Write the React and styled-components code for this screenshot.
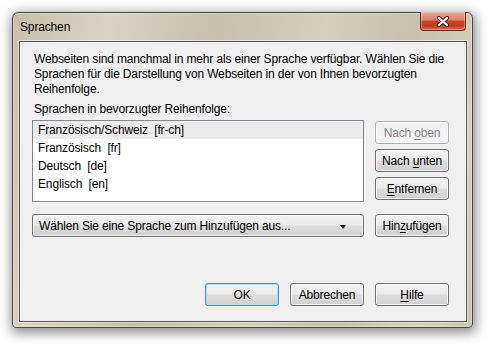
import React from 'react'
import styled, { createGlobalStyle } from 'styled-components'

const GlobalStyle = createGlobalStyle`
  html, body {
    margin: 0;
    padding: 0;
    background: #ffffff;
  }
  body {
    font-family: "Segoe UI", "Liberation Sans", Arial, sans-serif;
    font-size: 12px;
    letter-spacing: -0.15px;
    color: #000;
  }
`

const Desktop = styled.div`
  width: 488px;
  height: 344px;
  padding: 12px 0 0 12px;
  box-sizing: border-box;
  overflow: hidden;
`

const Window = styled.div`
  width: 461px;
  height: 316px;
  box-sizing: border-box;
  display: flex;
  flex-direction: column;
  padding: 0 5px 5px 6px;
  border: 1px solid #474747;
  border-radius: 6px 6px 4px 4px;
  background: linear-gradient(105deg, #c6bea9 0%, #d9d3c3 18%, #c7bfaa 38%, #d5cebc 58%, #c8c0ab 74%, #d7d0bf 90%, #cbc3ae 100%);
  box-shadow: 1px 3px 12px 2px rgba(0, 0, 0, 0.45), inset 0 0 0 1px rgba(255, 255, 255, 0.35);
`

const TitleBar = styled.div`
  height: 28px;
  display: flex;
  align-items: center;
  justify-content: space-between;
`

const Title = styled.span`
  padding-left: 1px;
  font-size: 12px;
  color: #000;
`

const CloseButton = styled.div`
  align-self: flex-start;
  margin-top: -1px;
  margin-right: 1px;
  width: 46px;
  height: 19px;
  box-sizing: border-box;
  display: flex;
  align-items: center;
  justify-content: center;
  border: 1px solid #6e2a1c;
  border-top: none;
  border-radius: 0 0 4px 4px;
  background: linear-gradient(#e8a897 0%, #dc7d66 45%, #c6432a 52%, #c13a22 75%, #d5704f 100%);
  box-shadow: inset 0 0 0 1px rgba(255, 210, 190, 0.45);
`

const Client = styled.div`
  flex: 1;
  display: flex;
  flex-direction: column;
  padding: 10px 17px 15px 12px;
  background: #f0f0f0;
  border: 1px solid #555555;
  box-shadow: 0 0 0 1px rgba(255, 255, 255, 0.45);
`

const Intro = styled.p`
  margin: 0;
  padding-left: 2px;
  line-height: 15px;
  white-space: nowrap;
`

const Label = styled.div`
  margin-top: 5px;
  padding-left: 2px;
  line-height: 15px;
`

const Row = styled.div`
  display: flex;
  align-items: flex-start;
  gap: 11px;
  margin-top: ${p => p.$top}px;
`

const ListBox = styled.div`
  flex: 1;
  height: 82px;
  box-sizing: border-box;
  border: 1px solid #828790;
  background: #ffffff;
`

const ListItem = styled.div`
  height: 18px;
  line-height: 18px;
  padding-left: 5px;
  background: ${p => (p.$selected ? '#ececec' : 'transparent')};
  white-space: pre;
`

const SideColumn = styled.div`
  display: flex;
  flex-direction: column;
  gap: 5px;
  padding-top: 1px;
`

const Button = styled.div`
  width: 74px;
  height: 23px;
  box-sizing: border-box;
  display: flex;
  align-items: center;
  justify-content: center;
  border: 1px solid ${p => (p.$disabled ? '#adb2b5' : p.$focused ? '#3c96d4' : '#707070')};
  border-radius: 3px;
  color: ${p => (p.$disabled ? '#838383' : '#000')};
  background: ${p => (p.$disabled
    ? '#f4f4f4'
    : 'linear-gradient(#f2f2f2 0%, #ebebeb 48%, #dddddd 52%, #cfcfcf 100%)')};
  box-shadow: inset 0 0 0 1px ${p => (p.$focused ? '#a6e2f8' : 'rgba(255, 255, 255, 0.75)')};
  white-space: pre;
  u {
    text-decoration: underline;
    text-underline-offset: 2px;
  }
`

const Combo = styled.div`
  flex: 1;
  height: 23px;
  box-sizing: border-box;
  display: flex;
  align-items: center;
  justify-content: space-between;
  padding: 0 17px 0 6px;
  border: 1px solid #707070;
  border-radius: 3px;
  background: linear-gradient(#f2f2f2 0%, #ebebeb 48%, #dddddd 52%, #cfcfcf 100%);
  box-shadow: inset 0 0 0 1px rgba(255, 255, 255, 0.75);
`

const Arrow = styled.span`
  width: 0;
  height: 0;
  border-left: 3.5px solid transparent;
  border-right: 3.5px solid transparent;
  border-top: 4px solid #000;
  margin-top: 2px;
`

const Footer = styled.div`
  margin-top: auto;
  display: flex;
  justify-content: flex-end;
  gap: 11px;
`

const CloseGlyph = () => (
  <svg width="14" height="11" viewBox="0 0 14 11">
    <path d="M3 2 L11 9 M11 2 L3 9" stroke="#4a1a10" strokeWidth="4.2" strokeLinecap="round" />
    <path d="M3 2 L11 9 M11 2 L3 9" stroke="#ffffff" strokeWidth="2.3" strokeLinecap="round" />
  </svg>
)

const languages = [
  'Französisch/Schweiz  [fr-ch]',
  'Französisch  [fr]',
  'Deutsch  [de]',
  'Englisch  [en]',
]

export default function App() {
  return (
    <>
      <GlobalStyle />
      <Desktop>
        <Window>
          <TitleBar>
            <Title>Sprachen</Title>
            <CloseButton><CloseGlyph /></CloseButton>
          </TitleBar>
          <Client>
            <Intro>
              Webseiten sind manchmal in mehr als einer Sprache verfügbar. Wählen Sie die<br />
              Sprachen für die Darstellung von Webseiten in der von Ihnen bevorzugten<br />
              Reihenfolge.
            </Intro>
            <Label>Sprachen in bevorzugter Reihenfolge:</Label>
            <Row $top={3}>
              <ListBox>
                {languages.map((lang, i) => (
                  <ListItem key={lang} $selected={i === 0}>{lang}</ListItem>
                ))}
              </ListBox>
              <SideColumn>
                <Button $disabled><span>Nach <u>o</u>ben</span></Button>
                <Button><span>Nach <u>u</u>nten</span></Button>
                <Button><span><u>E</u>ntfernen</span></Button>
              </SideColumn>
            </Row>
            <Row $top={12}>
              <Combo>
                <span>Wählen Sie eine Sprache zum Hinzufügen aus...</span>
                <Arrow />
              </Combo>
              <Button><span>Hin<u>z</u>ufügen</span></Button>
            </Row>
            <Footer>
              <Button $focused>OK</Button>
              <Button>Abbrechen</Button>
              <Button><span><u>H</u>ilfe</span></Button>
            </Footer>
          </Client>
        </Window>
      </Desktop>
    </>
  )
}
